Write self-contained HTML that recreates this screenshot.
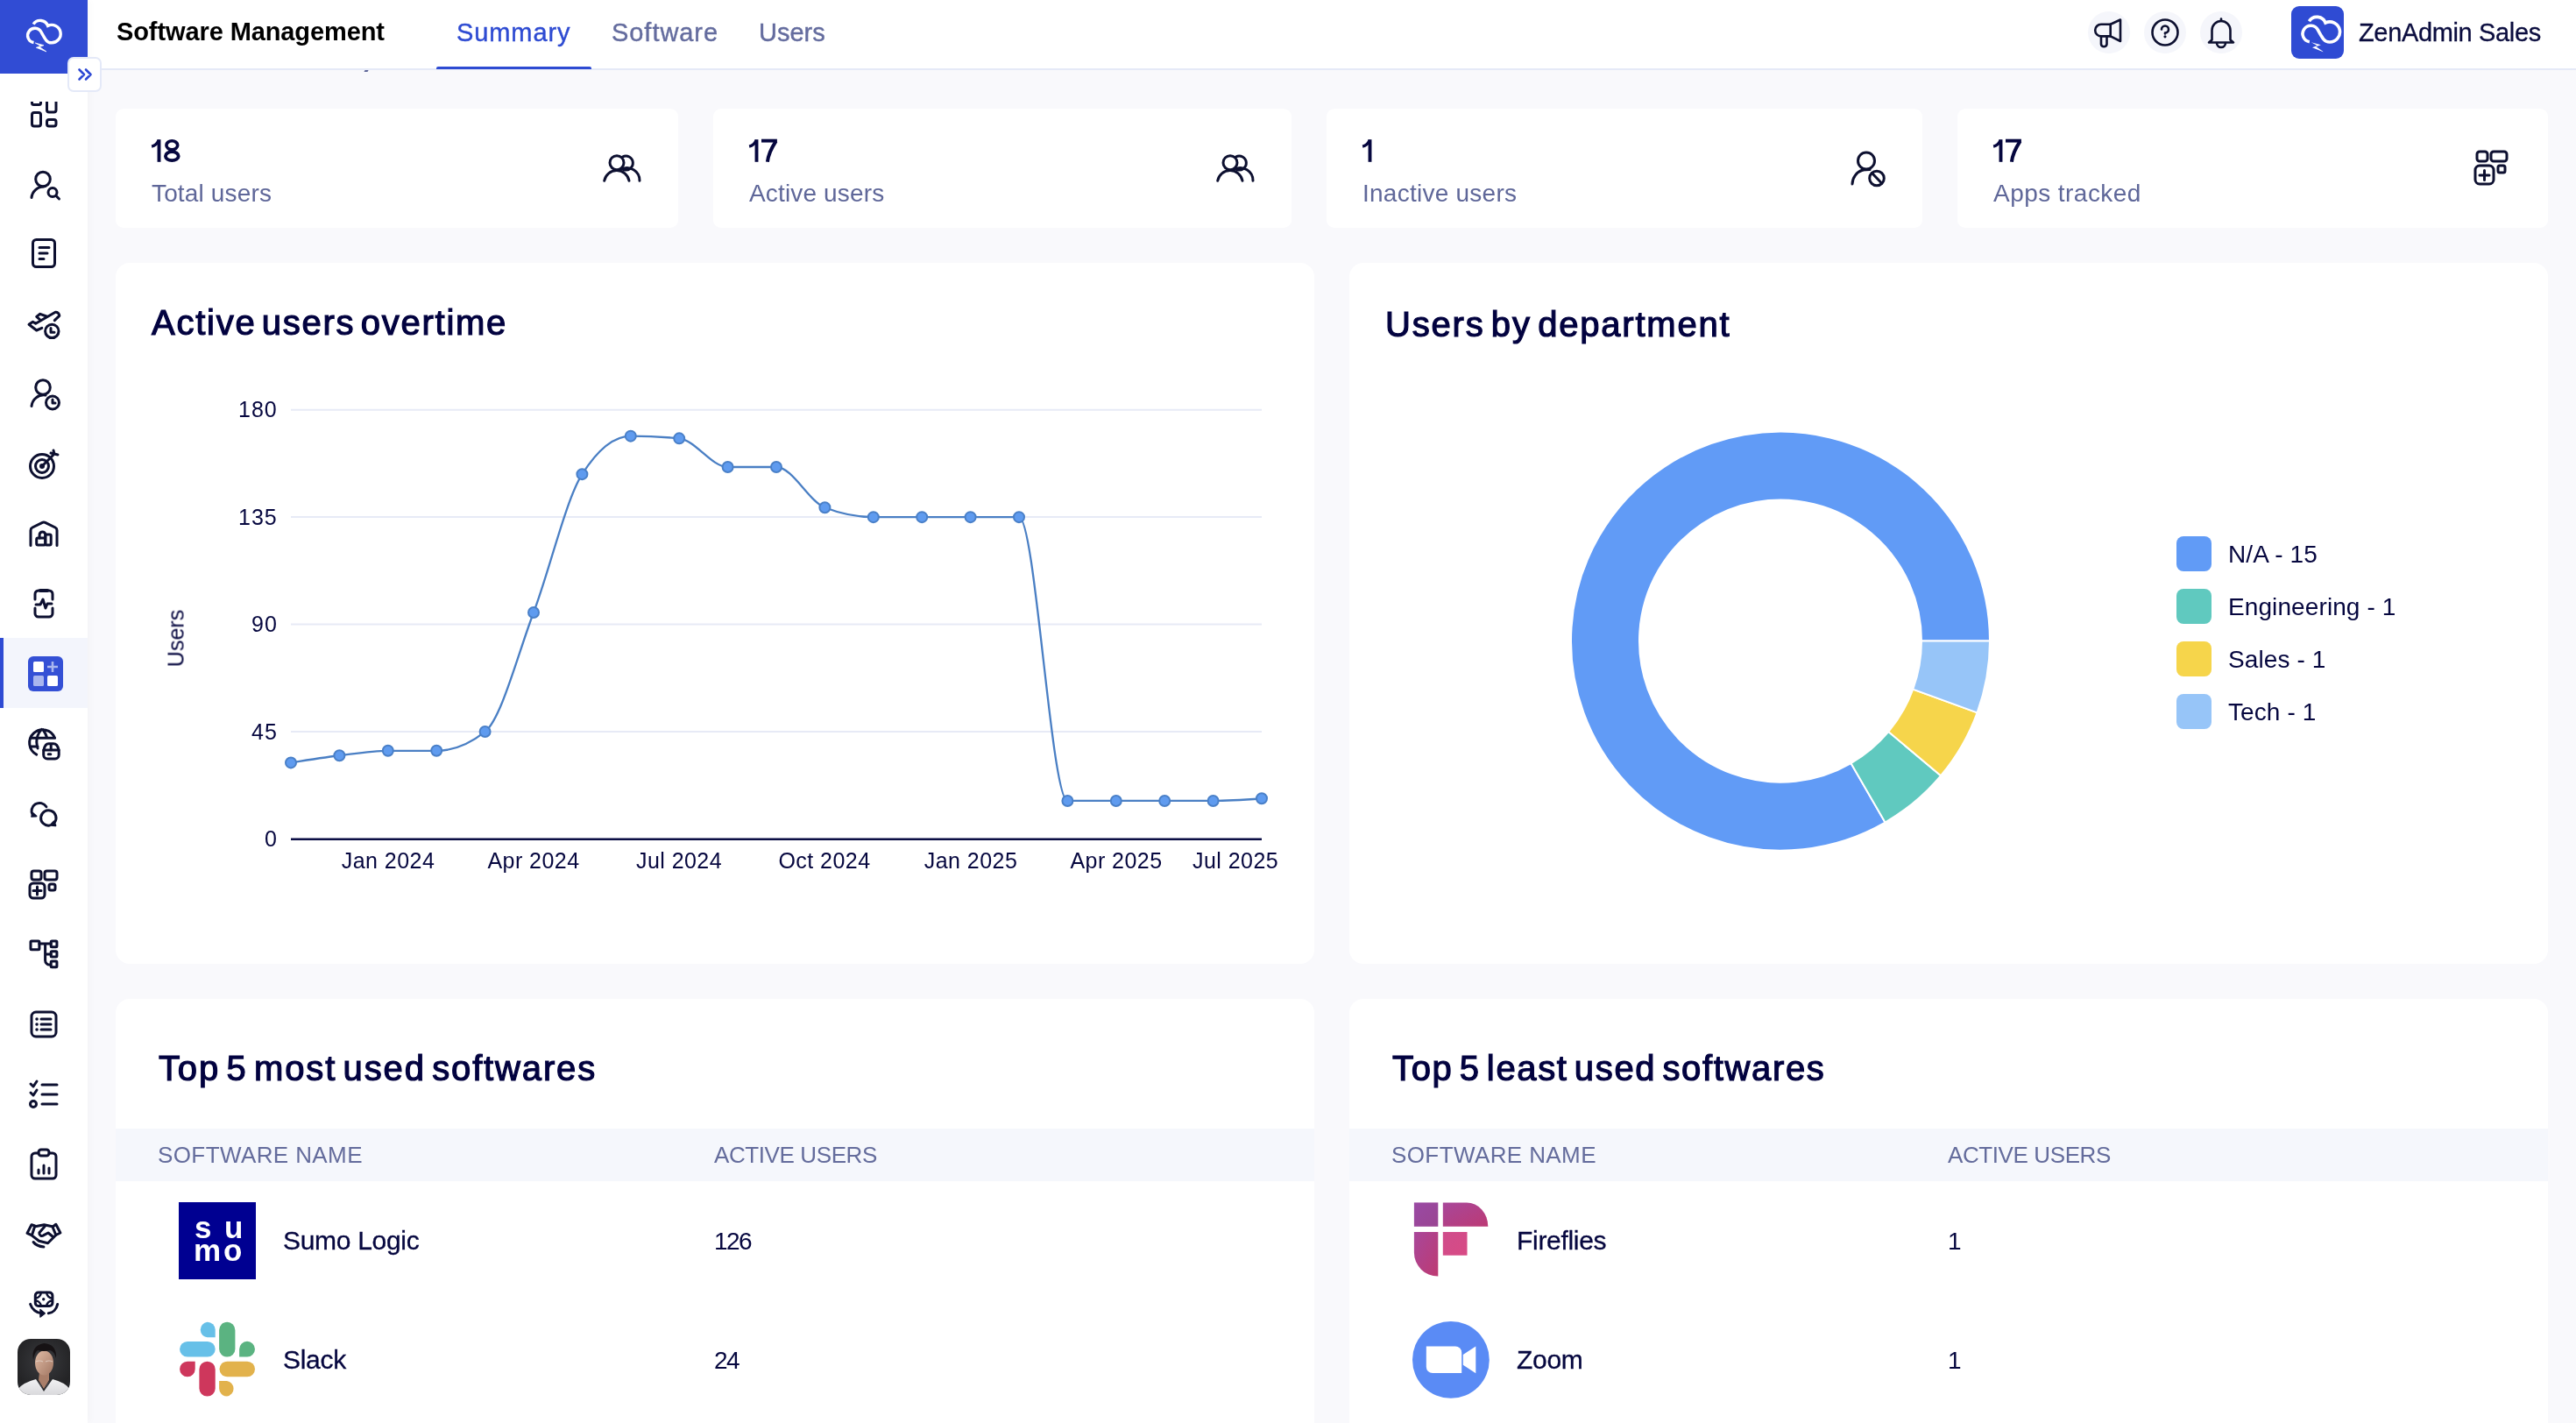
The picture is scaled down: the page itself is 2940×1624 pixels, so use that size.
<!DOCTYPE html><html><head><meta charset="utf-8"><style>
*{box-sizing:border-box;margin:0;padding:0}
html,body{width:2940px;height:1624px;overflow:hidden;background:#F9F9FC;font-family:"Liberation Sans",sans-serif}
.t{position:absolute;white-space:nowrap;line-height:1;will-change:transform}
.abs{position:absolute}
.card{position:absolute;background:#fff}
svg{position:absolute;overflow:visible}
</style></head><body>
<div class="card" style="left:132px;top:124px;width:642px;height:136px;border-radius:9px"></div>
<div class="card" style="left:814px;top:124px;width:660px;height:136px;border-radius:9px"></div>
<div class="card" style="left:1514px;top:124px;width:680px;height:136px;border-radius:9px"></div>
<div class="card" style="left:2234px;top:124px;width:674px;height:136px;border-radius:9px"></div>
<div class="card" style="left:132px;top:300px;width:1368px;height:800px;border-radius:16px"></div>
<div class="card" style="left:1540px;top:300px;width:1368px;height:800px;border-radius:16px"></div>
<div class="card" style="left:132px;top:1140px;width:1368px;height:600px;border-radius:16px"></div>
<div class="card" style="left:1540px;top:1140px;width:1368px;height:600px;border-radius:16px"></div>
<svg style="left:0;top:0" width="1" height="1"><g fill="none" stroke="#06073F" stroke-width="3.9"><path d="M181.5,159.2 V184.8"/><path d="M173.10000000000002,167.2 C176.8,166.39999999999998 179.3,164.2 181.20000000000002,160.0" stroke-width="3.3"/><ellipse cx="196.3" cy="165.79999999999998" rx="6.4" ry="5.0" stroke-width="3.6"/><ellipse cx="196.3" cy="178.2" rx="7.4" ry="5.0" stroke-width="3.8"/></g></svg>
<div class="t" style="left:172.5px;top:206.9px;font-size:28px;color:#5F6799;font-weight:400;letter-spacing:0.15px;">Total users</div>
<svg style="left:0;top:0" width="1" height="1"><g fill="none" stroke="#06073F" stroke-width="3.9"><path d="M863.5,159.2 V184.8"/><path d="M855.0999999999999,167.2 C858.8,166.39999999999998 861.3,164.2 863.1999999999999,160.0" stroke-width="3.3"/><path d="M869.0,160.64999999999998 H886.9"/><path d="M885.6,161.2 C881.0,168.2 877.0,175.2 875.9,184.8" stroke-width="4"/></g></svg>
<div class="t" style="left:854.5px;top:206.9px;font-size:28px;color:#5F6799;font-weight:400;letter-spacing:0.15px;">Active users</div>
<svg style="left:0;top:0" width="1" height="1"><g fill="none" stroke="#06073F" stroke-width="3.9"><path d="M1563.5,159.2 V184.8"/><path d="M1555.1,167.2 C1558.8,166.39999999999998 1561.3,164.2 1563.2,160.0" stroke-width="3.3"/></g></svg>
<div class="t" style="left:1554.5px;top:206.9px;font-size:28px;color:#5F6799;font-weight:400;letter-spacing:0.25px;">Inactive users</div>
<svg style="left:0;top:0" width="1" height="1"><g fill="none" stroke="#06073F" stroke-width="3.9"><path d="M2283.5,159.2 V184.8"/><path d="M2275.1000000000004,167.2 C2278.8,166.39999999999998 2281.3,164.2 2283.2000000000003,160.0" stroke-width="3.3"/><path d="M2289.0,160.64999999999998 H2306.9"/><path d="M2305.6,161.2 C2301.0,168.2 2297.0,175.2 2295.9,184.8" stroke-width="4"/></g></svg>
<div class="t" style="left:2274.5px;top:206.9px;font-size:28px;color:#5F6799;font-weight:400;letter-spacing:0.45px;">Apps tracked</div>
<svg style="left:0;top:0" width="1" height="1"><g fill="none" stroke="#0D1030" stroke-width="3" stroke-linecap="round">
<circle cx="704" cy="185.7" r="8"/><path d="M689.7,206.2 A14.4,14.4 0 0 1 718,206.2"/>
<path d="M710.5,179 A8,8 0 1 1 711.5,193.5"/><path d="M709,193.2 A14.4,14.4 0 0 1 730,206.2"/></g></svg>
<svg style="left:0;top:0" width="1" height="1"><g fill="none" stroke="#0D1030" stroke-width="3" stroke-linecap="round">
<circle cx="1404" cy="185.7" r="8"/><path d="M1389.7,206.2 A14.4,14.4 0 0 1 1418,206.2"/>
<path d="M1410.5,179 A8,8 0 1 1 1411.5,193.5"/><path d="M1409,193.2 A14.4,14.4 0 0 1 1430,206.2"/></g></svg>
<svg style="left:0;top:0" width="1" height="1"><g fill="none" stroke="#0D1030" stroke-width="3" stroke-linecap="round">
<circle cx="2130" cy="183.5" r="9.5"/><path d="M2114,210 A17,17 0 0 1 2126,194"/><path d="M2126,194 L2134,193.5"/>
<circle cx="2142" cy="203.5" r="8.3"/><path d="M2136.5,197.5 L2147.5,209"/></g></svg>
<svg style="left:0;top:0" width="1" height="1"><g fill="none" stroke="#0D1030" stroke-width="3" stroke-linecap="round" stroke-linejoin="round">
<rect x="2827" y="173" width="12" height="11" rx="3"/><rect x="2843" y="173" width="18" height="11" rx="3"/>
<rect x="2825" y="189" width="21" height="21" rx="5"/><rect x="2851" y="189" width="8" height="8" rx="2"/>
<path d="M2835.5,194.5 v11 M2830,200 h11"/></g></svg>
<div class="t" style="left:173.0px;top:347.6px;font-size:40px;color:#02023F;font-weight:400;letter-spacing:1.75px;-webkit-text-stroke:1.2px #02023F;word-spacing:-6.5px;">Active users overtime</div>
<svg style="left:0;top:0" width="1" height="1">
<line x1="332" y1="467.7" x2="1440" y2="467.7" stroke="#E7EAF6" stroke-width="2"/>
<line x1="332" y1="590.1" x2="1440" y2="590.1" stroke="#E7EAF6" stroke-width="2"/>
<line x1="332" y1="712.6" x2="1440" y2="712.6" stroke="#E7EAF6" stroke-width="2"/>
<line x1="332" y1="835.0" x2="1440" y2="835.0" stroke="#E7EAF6" stroke-width="2"/>
<line x1="332" y1="957.7" x2="1440" y2="957.7" stroke="#0B0D45" stroke-width="2.6"/>
<path d="M332.00,870.42 C350.47,867.48 368.93,864.53 387.40,862.26 C405.87,859.99 424.33,856.82 442.80,856.82 C461.27,856.82 479.73,856.82 498.20,856.82 C516.67,856.82 535.13,849.56 553.60,835.05 C572.07,820.54 590.53,747.97 609.00,698.99 C627.47,650.01 645.93,570.20 664.40,541.17 C682.87,512.14 701.33,497.63 719.80,497.63 C738.27,497.63 756.73,498.54 775.20,500.35 C793.67,502.17 812.13,533.01 830.60,533.01 C849.07,533.01 867.53,533.01 886.00,533.01 C904.47,533.01 922.93,572.01 941.40,579.27 C959.87,586.52 978.33,590.15 996.80,590.15 C1015.27,590.15 1033.73,590.15 1052.20,590.15 C1070.67,590.15 1089.13,590.15 1107.60,590.15 C1126.07,590.15 1144.53,590.15 1163.00,590.15 C1181.47,590.15 1199.93,913.96 1218.40,913.96 C1236.87,913.96 1255.33,913.96 1273.80,913.96 C1292.27,913.96 1310.73,913.96 1329.20,913.96 C1347.67,913.96 1366.13,913.96 1384.60,913.96 C1403.07,913.96 1421.53,912.60 1440.00,911.24" fill="none" stroke="#4A7FC4" stroke-width="2.3"/>
<g fill="#5F9BEF" stroke="#4A80C8" stroke-width="2"><circle cx="332.00" cy="870.42" r="6"/><circle cx="387.40" cy="862.26" r="6"/><circle cx="442.80" cy="856.82" r="6"/><circle cx="498.20" cy="856.82" r="6"/><circle cx="553.60" cy="835.05" r="6"/><circle cx="609.00" cy="698.99" r="6"/><circle cx="664.40" cy="541.17" r="6"/><circle cx="719.80" cy="497.63" r="6"/><circle cx="775.20" cy="500.35" r="6"/><circle cx="830.60" cy="533.01" r="6"/><circle cx="886.00" cy="533.01" r="6"/><circle cx="941.40" cy="579.27" r="6"/><circle cx="996.80" cy="590.15" r="6"/><circle cx="1052.20" cy="590.15" r="6"/><circle cx="1107.60" cy="590.15" r="6"/><circle cx="1163.00" cy="590.15" r="6"/><circle cx="1218.40" cy="913.96" r="6"/><circle cx="1273.80" cy="913.96" r="6"/><circle cx="1329.20" cy="913.96" r="6"/><circle cx="1384.60" cy="913.96" r="6"/><circle cx="1440.00" cy="911.24" r="6"/></g>
</svg>
<div class="t" style="right:2623.5px;top:455.3px;font-size:25px;letter-spacing:1px;color:#06073F">180</div>
<div class="t" style="right:2623.5px;top:577.7px;font-size:25px;letter-spacing:1px;color:#06073F">135</div>
<div class="t" style="right:2623.5px;top:700.2px;font-size:25px;letter-spacing:1px;color:#06073F">90</div>
<div class="t" style="right:2623.5px;top:822.6px;font-size:25px;letter-spacing:1px;color:#06073F">45</div>
<div class="t" style="right:2623.5px;top:945.3px;font-size:25px;letter-spacing:1px;color:#06073F">0</div>
<div class="t" style="left:342.8px;width:200px;text-align:center;top:970.2px;font-size:25px;letter-spacing:0.45px;color:#06073F">Jan 2024</div>
<div class="t" style="left:509.0px;width:200px;text-align:center;top:970.2px;font-size:25px;letter-spacing:0.45px;color:#06073F">Apr 2024</div>
<div class="t" style="left:675.2px;width:200px;text-align:center;top:970.2px;font-size:25px;letter-spacing:0.45px;color:#06073F">Jul 2024</div>
<div class="t" style="left:841.4px;width:200px;text-align:center;top:970.2px;font-size:25px;letter-spacing:0.45px;color:#06073F">Oct 2024</div>
<div class="t" style="left:1007.6px;width:200px;text-align:center;top:970.2px;font-size:25px;letter-spacing:0.45px;color:#06073F">Jan 2025</div>
<div class="t" style="left:1173.8px;width:200px;text-align:center;top:970.2px;font-size:25px;letter-spacing:0.45px;color:#06073F">Apr 2025</div>
<div class="t" style="right:1481px;top:970.2px;font-size:25px;letter-spacing:0.45px;color:#06073F">Jul 2025</div>
<div class="t" style="left:151px;top:716.0px;width:100px;text-align:center;font-size:25px;line-height:25px;color:#06073F;transform:rotate(-90deg)">Users</div>
<svg style="left:0;top:0" width="1" height="1">
<path d="M2271.00,731.60 A239,239 0 1 0 2151.50,938.58 L2112.50,871.03 A161,161 0 1 1 2193.00,731.60 Z" fill="#619BF6" stroke="#fff" stroke-width="2"/>
<path d="M2151.50,938.58 A239,239 0 0 0 2215.08,885.23 L2155.33,835.09 A161,161 0 0 1 2112.50,871.03 Z" fill="#60C9BF" stroke="#fff" stroke-width="2"/>
<path d="M2215.08,885.23 A239,239 0 0 0 2256.59,813.34 L2183.29,786.67 A161,161 0 0 1 2155.33,835.09 Z" fill="#F6D54B" stroke="#fff" stroke-width="2"/>
<path d="M2256.59,813.34 A239,239 0 0 0 2271.00,731.60 L2193.00,731.60 A161,161 0 0 1 2183.29,786.67 Z" fill="#97C5F8" stroke="#fff" stroke-width="2"/>
</svg>
<div class="t" style="left:1581.0px;top:349.9px;font-size:40px;color:#02023F;font-weight:400;letter-spacing:1.8px;-webkit-text-stroke:1.2px #02023F;word-spacing:-5.5px;">Users by department</div>
<div class="abs" style="left:2484px;top:612px;width:40px;height:40px;border-radius:8px;background:#619BF6"></div>
<div class="t" style="left:2543.0px;top:618.6px;font-size:28px;color:#06073F;font-weight:400;letter-spacing:0.1px;">N/A - 15</div>
<div class="abs" style="left:2484px;top:672px;width:40px;height:40px;border-radius:8px;background:#60C9BF"></div>
<div class="t" style="left:2543.0px;top:678.6px;font-size:28px;color:#06073F;font-weight:400;letter-spacing:0.1px;">Engineering - 1</div>
<div class="abs" style="left:2484px;top:732px;width:40px;height:40px;border-radius:8px;background:#F6D54B"></div>
<div class="t" style="left:2543.0px;top:738.6px;font-size:28px;color:#06073F;font-weight:400;letter-spacing:0.1px;">Sales - 1</div>
<div class="abs" style="left:2484px;top:792px;width:40px;height:40px;border-radius:8px;background:#97C5F8"></div>
<div class="t" style="left:2543.0px;top:798.6px;font-size:28px;color:#06073F;font-weight:400;letter-spacing:0.1px;">Tech - 1</div>
<div class="t" style="left:180.5px;top:1198.6px;font-size:40px;color:#02023F;font-weight:400;letter-spacing:1.85px;-webkit-text-stroke:1.2px #02023F;word-spacing:-5.5px;">Top 5 most used softwares</div>
<div class="abs" style="left:132px;top:1288px;width:1368px;height:60px;background:#F5F7FC"></div>
<div class="t" style="left:180.0px;top:1305.3px;font-size:26px;color:#646C9C;font-weight:400;letter-spacing:0.4px;">SOFTWARE NAME</div>
<div class="t" style="left:815.0px;top:1305.3px;font-size:26px;color:#646C9C;font-weight:400;letter-spacing:-0.4px;">ACTIVE USERS</div>
<div class="t" style="left:323.0px;top:1401.1px;font-size:30px;color:#06073F;font-weight:400;letter-spacing:-0.3px;-webkit-text-stroke:0.3px #06073F;">Sumo Logic</div>
<div class="t" style="left:814.5px;top:1402.8px;font-size:28px;color:#06073F;font-weight:400;letter-spacing:-1.6px;">126</div>
<div class="abs" style="left:204px;top:1372px;width:88px;height:88px;background:#000091"></div>
<div class="t" style="left:222.0px;top:1382.7px;font-size:35px;color:#fff;font-weight:700;">s</div>
<div class="t" style="left:255.5px;top:1382.7px;font-size:35px;color:#fff;font-weight:700;">u</div>
<div class="t" style="left:221.0px;top:1408.9px;font-size:35px;color:#fff;font-weight:700;">m</div>
<div class="t" style="left:255.0px;top:1408.9px;font-size:35px;color:#fff;font-weight:700;">o</div>
<div class="t" style="left:323.0px;top:1537.1px;font-size:30px;color:#06073F;font-weight:400;letter-spacing:-0.3px;-webkit-text-stroke:0.3px #06073F;">Slack</div>
<div class="t" style="left:814.5px;top:1538.8px;font-size:28px;color:#06073F;font-weight:400;letter-spacing:-1.6px;">24</div>
<svg style="left:0;top:0" width="1" height="1"><g transform="translate(196,1500)">
<rect x="9.1" y="31" width="40.6" height="17.6" rx="8.8" fill="#67C0E8"/><path d="M49.7,26.3 H40.6 A8.8,8.8 0 0 1 40.6,8.8 A9,9 0 0 1 49.7,17.6 Z" fill="#67C0E8"/>
<rect x="54.1" y="8.8" width="18.3" height="39.8" rx="9.1" fill="#5BB381"/><path d="M77.1,48.6 V39.8 A8.9,8.9 0 0 1 95,39.8 A8.9,8.9 0 0 1 86,48.6 Z" fill="#5BB381"/>
<rect x="31.4" y="53.7" width="18.3" height="39.9" rx="9.1" fill="#CE375C"/><path d="M26.7,53.7 V62.5 A8.8,8.8 0 0 1 17.9,71.3 A8.8,8.8 0 0 1 17.9,53.7 Z" fill="#CE375C"/>
<rect x="54.5" y="53.7" width="40.5" height="17.6" rx="8.8" fill="#E2B24C"/><path d="M54.1,76 H63 A8.9,8.9 0 0 1 63,93.6 A8.9,8.9 0 0 1 54.1,84.8 Z" fill="#E2B24C"/>
</g></svg>
<div class="t" style="left:1588.5px;top:1198.6px;font-size:40px;color:#02023F;font-weight:400;letter-spacing:1.65px;-webkit-text-stroke:1.2px #02023F;word-spacing:-5.5px;">Top 5 least used softwares</div>
<div class="abs" style="left:1540px;top:1288px;width:1368px;height:60px;background:#F5F7FC"></div>
<div class="t" style="left:1588.0px;top:1305.3px;font-size:26px;color:#646C9C;font-weight:400;letter-spacing:0.4px;">SOFTWARE NAME</div>
<div class="t" style="left:2223.0px;top:1305.3px;font-size:26px;color:#646C9C;font-weight:400;letter-spacing:-0.4px;">ACTIVE USERS</div>
<div class="t" style="left:1731.0px;top:1401.1px;font-size:30px;color:#06073F;font-weight:400;letter-spacing:-0.3px;-webkit-text-stroke:0.3px #06073F;">Fireflies</div>
<div class="t" style="left:2222.5px;top:1402.8px;font-size:28px;color:#06073F;font-weight:400;letter-spacing:-1.6px;">1</div>
<svg style="left:0;top:0" width="1" height="1"><defs>
<linearGradient id="g1" x1="0" y1="0" x2="1" y2="1"><stop offset="0" stop-color="#9A4AA4"/><stop offset="1" stop-color="#9A4592"/></linearGradient>
<linearGradient id="g2" x1="0" y1="0" x2="1" y2="1"><stop offset="0" stop-color="#A8479A"/><stop offset="1" stop-color="#BC3A74"/></linearGradient>
<linearGradient id="g3" x1="0" y1="0" x2="1" y2="1"><stop offset="0" stop-color="#A8479A"/><stop offset="1" stop-color="#BE3A72"/></linearGradient>
<linearGradient id="g4" x1="0" y1="0" x2="1" y2="1"><stop offset="0" stop-color="#CF4D8C"/><stop offset="1" stop-color="#D84A84"/></linearGradient></defs>
<g transform="translate(1604,1364)"><rect x="9.9" y="8.4" width="27.4" height="27.4" fill="url(#g1)"/><path d="M42.8,8.4 H70 A24.3,27.4 0 0 1 94.3,35.8 H42.8 Z" fill="url(#g2)"/>
<path d="M9.9,42 H37.3 V92.5 H37 A27,27 0 0 1 9.9,65.5 Z" fill="url(#g3)"/><rect x="42.8" y="42" width="27.7" height="26.7" fill="url(#g4)"/></g></svg>
<div class="t" style="left:1731.0px;top:1537.1px;font-size:30px;color:#06073F;font-weight:400;letter-spacing:-0.3px;-webkit-text-stroke:0.3px #06073F;">Zoom</div>
<div class="t" style="left:2222.5px;top:1538.8px;font-size:28px;color:#06073F;font-weight:400;letter-spacing:-1.6px;">1</div>
<svg style="left:0;top:0" width="1" height="1"><g transform="translate(1604,1500)"><circle cx="51.9" cy="51.9" r="43.9" fill="#5A8BF5"/>
<path d="M23.8,36.5 H57 A7.2,7.2 0 0 1 64.2,43.7 V67.1 H31 A7.2,7.2 0 0 1 23.8,59.9 Z" fill="#fff"/><path d="M65.8,46 L80.3,36.5 V67.3 L65.8,57.7 Z" fill="#fff"/></g></svg>
<div class="abs" style="left:100px;top:0;width:2840px;height:78px;background:#fff;border-bottom:2px solid #E5E9F7;height:80px"></div>
<div class="abs" style="left:415.5px;top:80px;width:4px;height:2px;background:#5E6698;transform:skewX(-30deg)"></div>
<div class="t" style="left:132.5px;top:22.0px;font-size:29px;color:#000;font-weight:700;letter-spacing:-0.1px;">Software Management</div>
<div class="t" style="left:521.0px;top:22.8px;font-size:29px;color:#2E4BD2;font-weight:400;letter-spacing:0.9px;-webkit-text-stroke:0.4px #2E4BD2;">Summary</div>
<div class="t" style="left:698.0px;top:22.8px;font-size:29px;color:#646C9E;font-weight:400;letter-spacing:0.95px;-webkit-text-stroke:0.4px #646C9E;">Software</div>
<div class="t" style="left:866.0px;top:22.8px;font-size:29px;color:#646C9E;font-weight:400;-webkit-text-stroke:0.4px #646C9E;">Users</div>
<div class="abs" style="left:498px;top:75.5px;width:177px;height:3px;background:#2E4BD2;border-radius:2px 2px 0 0"></div>
<div class="abs" style="left:2383px;top:13px;width:48px;height:48px;border-radius:50%;background:#F5F6FB"></div>
<div class="abs" style="left:2447px;top:13px;width:48px;height:48px;border-radius:50%;background:#F5F6FB"></div>
<div class="abs" style="left:2511px;top:13px;width:48px;height:48px;border-radius:50%;background:#F5F6FB"></div>
<svg style="left:0;top:0" width="1" height="1"><g fill="none" stroke="#0D1030" stroke-width="2.6" stroke-linecap="round" stroke-linejoin="round">
<path d="M2408.7,27.8 H2398 A6.8,6.8 0 0 0 2398,41.4 H2408.7 Z"/><path d="M2408.7,27.8 L2420,22.5 V47 L2408.7,41.4"/><path d="M2398,41.5 V50.5 A3.3,3.3 0 0 0 2404.5,50.5 V41.5"/>
<circle cx="2471" cy="37" r="14.5"/><path d="M2467,33.5 A4,4 0 1 1 2471,37.5 V38.5"/>
<path d="M2524.5,45.5 V34.5 A10.5,10.5 0 0 1 2545.5,34.5 V45.5 L2549,48.5 H2521 Z"/><path d="M2535,21.5 V24"/><path d="M2530,49 A5,5 0 0 0 2540,49"/>
</g><circle cx="2471" cy="41.8" r="1.6" fill="#0D1030"/></svg>
<div class="abs" style="left:2615px;top:7px;width:60px;height:60px;border-radius:9px;background:#2F4BD3"></div>
<svg style="left:0;top:0" width="1" height="1"><g transform="translate(2615.5,7) scale(1.13) translate(-20.5,-12.5)"><path d="M38.5,48.5 A8.2,8.2 0 1 1 47,36.5 C51.7,45.1 53.6,48.8 58.6,48.8 A10.2,10.2 0 1 0 54.6,29.4 A9.3,9.3 0 0 0 38.1,27.7" fill="none" stroke="#fff" stroke-width="3.2" stroke-linecap="butt"/><path d="M40.2,49.0 L50,51.7 L45.2,53.5 L52.9,58.9 L41.3,54.3 L46.3,52.4 Z" fill="#fff"/></g></svg>
<div class="t" style="left:2692.0px;top:22.8px;font-size:29px;color:#0B0D3F;font-weight:400;letter-spacing:-0.35px;-webkit-text-stroke:0.3px #0B0D3F;">ZenAdmin Sales</div>
<div class="abs" style="left:0;top:0;width:100px;height:1624px;background:#fff;box-shadow:1px 0 10px rgba(0,0,0,0.035)"></div>
<div class="abs" style="left:0;top:0;width:100px;height:84px;background:#314CD4"></div>
<svg style="left:0;top:0" width="1" height="1"><path d="M38.5,48.5 A8.2,8.2 0 1 1 47,36.5 C51.7,45.1 53.6,48.8 58.6,48.8 A10.2,10.2 0 1 0 54.6,29.4 A9.3,9.3 0 0 0 38.1,27.7" fill="none" stroke="#fff" stroke-width="3.4"/><path d="M40.2,49.0 L50,51.7 L45.2,53.5 L52.9,58.9 L41.3,54.3 L46.3,52.4 Z" fill="#fff" stroke="#fff" stroke-width="0.7" stroke-linejoin="round"/></svg>
<div class="abs" style="left:0;top:728px;width:100px;height:80px;background:#F3F5FC"></div>
<div class="abs" style="left:0;top:728px;width:4px;height:80px;background:#2F4BD3"></div>
<div class="abs" style="left:32px;top:749px;width:40px;height:40px;border-radius:6px;background:#3450D5"></div>
<svg style="left:0;top:0" width="1" height="1"><rect x="38" y="755" width="12" height="12" rx="1.5" fill="#fff"/><rect x="38" y="771" width="12" height="12" rx="1.5" fill="#A9B6EE"/><rect x="54" y="771" width="12" height="12" rx="1.5" fill="#fff"/>
<path d="M60,755 V767 M54,761 H66" stroke="#A9B6EE" stroke-width="2.6"/></svg>
<div class="abs" style="left:0;top:116px;width:100px;height:40px;overflow:hidden"><svg style="left:0;top:0" width="1" height="1"><g transform="translate(0,-116)" fill="none" stroke="#0D1030" stroke-width="3" stroke-linejoin="round"><rect x="36.5" y="106" width="10" height="13.5" rx="2"/><rect x="36.5" y="128.5" width="10" height="15.5" rx="2.5"/><rect x="53.5" y="106" width="10.5" height="22" rx="2.5"/><rect x="53.5" y="136.5" width="10.5" height="7.5" rx="2.5"/></g></svg></div>
<svg style="left:0;top:0" width="1" height="1"><g transform="translate(50,209)" fill="none" stroke="#0D1030" stroke-width="3" stroke-linecap="round" stroke-linejoin="round"><circle cx="-1" cy="-4.5" r="8.3"/><path d="M-14,16.5 A14,14 0 0 1 0,4"/><circle cx="10" cy="10.5" r="5"/><path d="M14,14.5 L17.5,18"/></g></svg>
<svg style="left:0;top:0" width="1" height="1"><g transform="translate(50,289)" fill="none" stroke="#0D1030" stroke-width="3" stroke-linecap="round" stroke-linejoin="round"><rect x="-12.5" y="-15.5" width="25" height="31" rx="4"/><path d="M-5,-6.5 H6 M-5,0 H4 M-5,6.5 H0"/></g></svg>
<svg style="left:0;top:0" width="1" height="1"><g transform="translate(50,369)" fill="none" stroke="#0D1030" stroke-width="3" stroke-linecap="round" stroke-linejoin="round"><path d="M-2.2,5.4 L-8.3,8 L-17,1.3 L-12.5,-1.8 L-9.3,0.2 L13.2,-12.8 A4.2,4.2 0 0 1 17.8,-8.6 L12.3,-3.3"/><path d="M-4.6,-4.4 L-8.3,-7.6 L-4.2,-10.7 L3,-8"/><circle cx="9.3" cy="8.9" r="7.7"/><path d="M8,5.5 V10.2 H12"/></g></svg>
<svg style="left:0;top:0" width="1" height="1"><g transform="translate(50,449)" fill="none" stroke="#0D1030" stroke-width="3" stroke-linecap="round" stroke-linejoin="round"><circle cx="-1" cy="-7" r="8.3"/><path d="M-14,14.5 A14,14 0 0 1 2,2"/><circle cx="10" cy="10.5" r="7.5"/><path d="M10,7 V11 H13"/></g></svg>
<svg style="left:0;top:0" width="1" height="1"><g transform="translate(50,529)" fill="none" stroke="#0D1030" stroke-width="3" stroke-linecap="round" stroke-linejoin="round"><circle cx="-2" cy="3" r="13.5"/><circle cx="-2" cy="3" r="7.5"/><path d="M-2,3 L12,-11 M8,-12 L12,-11 L11,-15 M12,-11 L16,-10"/><circle cx="-2" cy="3" r="1.5" fill="#0D1030"/></g></svg>
<svg style="left:0;top:0" width="1" height="1"><g transform="translate(50,609)" fill="none" stroke="#0D1030" stroke-width="3" stroke-linecap="round" stroke-linejoin="round"><path d="M-15,13.6 V-3.8 Q-15,-6 -13,-7 L-1.6,-12.6 Q0,-13.4 1.6,-12.6 L13,-7 Q15,-6 15,-3.8 V13.6"/><rect x="-8.3" y="4.9" width="10.1" height="8" rx="1.5"/><path d="M-4.9,4.9 V1.3 A3.35,3.35 0 0 1 1.8,1.3 V4.9"/><rect x="1.8" y="1.1" width="6.4" height="11.8" rx="1.5"/></g></svg>
<svg style="left:0;top:0" width="1" height="1"><g transform="translate(50,689)" fill="none" stroke="#0D1030" stroke-width="3" stroke-linecap="round" stroke-linejoin="round"><path d="M-10,-5 V-11 A4,4 0 0 1 -6,-15 H6 A4,4 0 0 1 10,-11 V-5 M-10,5 V11 A4,4 0 0 0 -6,15 H6 A4,4 0 0 0 10,11 V5"/><path d="M-4,-15 H4" stroke-width="4"/><path d="M-9,1 H-4 L-1,-5 L2,5 L4,0 H9"/></g></svg>
<svg style="left:0;top:0" width="1" height="1"><g transform="translate(50,849)" fill="none" stroke="#0D1030" stroke-width="3" stroke-linecap="round" stroke-linejoin="round"><path d="M-8.3,12.1 A15,15 0 1 1 12.6,-6.7 H-15.5 M-15.5,3 H-7 M-2.6,-16.6 C-6.5,-12 -8.5,-7 -8.2,-2 C-8,1 -7.5,3 -7,5 M-0.9,-16.4 C1,-13.5 2.6,-10.5 3.7,-7"/><path d="M-0.3,7 V12.5 A4.4,4.4 0 0 0 4.1,16.9 H12.8 A4.4,4.4 0 0 0 17.2,12.5 V7 Z"/><path d="M0,6.8 C1,2 3,-0.2 5.5,-0.2 H11 C13.5,-0.2 16,2 17,6.8 M8.2,0 V6.8"/><path d="M5.2,11.7 H7.8"/></g></svg>
<svg style="left:0;top:0" width="1" height="1"><g transform="translate(50,929)" fill="none" stroke="#0D1030" stroke-width="3" stroke-linecap="round" stroke-linejoin="round"><path d="M2.9,-8.3 A8.6,8.6 0 0 0 -12.6,1.5"/><path d="M-13.8,2.8 L-12.5,-1 L-8.5,2.4 Z" fill="#0D1030" stroke-width="2"/><path d="M12.4,9.5 A8.7,8.7 0 1 0 6.3,13.1"/><path d="M11.6,8.5 L13.4,13.2 L7.5,12.8 Z" fill="#0D1030" stroke-width="2"/></g></svg>
<svg style="left:0;top:0" width="1" height="1"><g transform="translate(50,1009)" fill="none" stroke="#0D1030" stroke-width="3" stroke-linecap="round" stroke-linejoin="round"><rect x="-14" y="-15" width="11" height="10" rx="2.5"/><rect x="1" y="-15" width="14" height="10" rx="2.5"/><rect x="-16" y="-1" width="17" height="17" rx="4"/><rect x="6" y="0" width="7" height="7" rx="2"/><path d="M-7.5,3 V12 M-12,7.5 H-3"/></g></svg>
<svg style="left:0;top:0" width="1" height="1"><g transform="translate(50,1089)" fill="none" stroke="#0D1030" stroke-width="3" stroke-linecap="round" stroke-linejoin="round"><rect x="-15" y="-14.9" width="9.9" height="9.7" rx="1"/><rect x="8.2" y="-14.9" width="6.7" height="6.6" rx="1"/><rect x="8.2" y="-3.3" width="6.7" height="6.3" rx="1"/><rect x="8.2" y="8.1" width="6.7" height="6.7" rx="1"/><path d="M-5.1,-11.9 H8.2 M1.6,-11.9 V7 A5,5 0 0 0 7.5,12 M1.6,0 H8.2"/></g></svg>
<svg style="left:0;top:0" width="1" height="1"><g transform="translate(50,1169)" fill="none" stroke="#0D1030" stroke-width="3" stroke-linecap="round" stroke-linejoin="round"><rect x="-14" y="-14" width="28" height="28" rx="5"/><path d="M-3,-6 H8 M-3,0 H8 M-3,6 H8"/><path d="M-8,-6 h0.1 M-8,0 h0.1 M-8,6 h0.1" stroke-width="3.5"/></g></svg>
<svg style="left:0;top:0" width="1" height="1"><g transform="translate(50,1249)" fill="none" stroke="#0D1030" stroke-width="3" stroke-linecap="round" stroke-linejoin="round"><path d="M-15,-12 L-12,-9 L-8,-15 M-15,-2 L-12,1 L-8,-5"/><circle cx="-12" cy="11" r="3.5"/><path d="M-2,-11 H15 M-2,0 H15 M-2,11 H15"/></g></svg>
<svg style="left:0;top:0" width="1" height="1"><g transform="translate(50,1329)" fill="none" stroke="#0D1030" stroke-width="3" stroke-linecap="round" stroke-linejoin="round"><path d="M-6,-13 H-10 A4,4 0 0 0 -14,-9 V12 A4,4 0 0 0 -10,16 H10 A4,4 0 0 0 14,12 V-9 A4,4 0 0 0 10,-13 H6"/><rect x="-6" y="-17" width="12" height="7" rx="3"/><path d="M-6,10 V6 M0,10 V1 M6,10 V4"/></g></svg>
<svg style="left:0;top:0" width="1" height="1"><g transform="translate(50,1409)" fill="none" stroke="#0D1030" stroke-width="3" stroke-linecap="round" stroke-linejoin="round"><path d="M-14,-11.3 L-10.2,-10 L-13.6,0.9 L-19,-1.6 Z"/><path d="M13.8,-11.7 L10,-8.8 L13.8,0.5 L18.9,-2 Z"/><path d="M-9.8,-9.2 L0.4,-11.3 L9.6,-9.2"/><path d="M-13.1,1.4 L-5.5,7.3 L4.6,9.8 L13.8,0.5"/><path d="M1.6,-10 L-5.1,-2.2 A3,3 0 0 0 -0.5,0.9 L5,-2 L10.5,2.5"/><path d="M-11.9,8.5 C-9,12.5 -5,13.5 -0.1,14"/></g></svg>
<svg style="left:0;top:0" width="1" height="1"><g transform="translate(50,1489)" fill="none" stroke="#0D1030" stroke-width="3" stroke-linecap="round" stroke-linejoin="round"><rect x="-9.7" y="-14" width="19.6" height="15.5" rx="3.5"/><circle cx="-0.3" cy="-6.2" r="1.7" fill="#0D1030" stroke="none"/><path d="M-9.5,-7.5 A6.5,6.5 0 0 0 -3.2,-14 M3.2,-14 A6.5,6.5 0 0 0 9.7,-7.5 M9.7,-4.5 A6.5,6.5 0 0 0 3.2,1.5 M-3.2,1.5 A6.5,6.5 0 0 0 -9.5,-4.5" stroke-width="2.4"/><path d="M-15.4,-0.6 C-13.5,5.5 -8,9.5 -2.5,9.8 M5.3,9.8 C10.5,9.3 14.5,5 15.7,-0.6"/><path d="M-4,5.6 L1.2,9.8 L-4,14 Z" fill="#0D1030" stroke-width="1.5"/></g></svg>
<div class="abs" style="left:77px;top:65px;width:39px;height:40px;border-radius:7px;background:#fff;border:2px solid #E4E9F8"></div>
<svg style="left:0;top:0" width="1" height="1"><path d="M90.5,79.5 L96,85 L90.5,90.5 M98,79.5 L103.5,85 L98,90.5" fill="none" stroke="#2D48D4" stroke-width="2.6" stroke-linecap="round" stroke-linejoin="round"/></svg>
<div class="abs" style="left:20px;top:1528px;width:60px;height:64px;border-radius:15px;overflow:hidden;background:radial-gradient(circle at 50% 40%,#3a3b3f,#232325 70%,#2e3138)">
<svg style="left:0;top:0" width="60" height="64"><defs><linearGradient id="sk" x1="0" y1="0" x2="1" y2="1"><stop offset="0" stop-color="#E0BBA5"/><stop offset="1" stop-color="#A27763"/></linearGradient>
<linearGradient id="sh" x1="0" y1="0" x2="0" y2="1"><stop offset="0" stop-color="#F2F2F3"/><stop offset="1" stop-color="#D9D9DC"/></linearGradient></defs>
<path d="M0,64 L1,57 Q6,50 21,46 L30,60 L40,46 Q55,50 59,57 L60,64 Z" fill="url(#sh)"/><path d="M30,60 L23,47 L26,52 Z M30,60 L37,47 L34,52 Z" fill="#BDBDC2"/>
<path d="M25,38 H36 V47 L30,57 L24,47 Z" fill="#A97E69"/><ellipse cx="30.5" cy="27.5" rx="10.5" ry="14" fill="url(#sk)"/>
<path d="M18,24 Q15,8 30,5 Q45,6 44,22 Q42,14 37,13 Q30,15 23,13 Q19,16 18,24 Z" fill="#161214"/>
<path d="M21,26 Q25,24 29,26 M32,26 Q36,24 40,26" stroke="#EDE3DC" stroke-width="1.1" fill="none" opacity="0.6"/></svg></div>
</body></html>
